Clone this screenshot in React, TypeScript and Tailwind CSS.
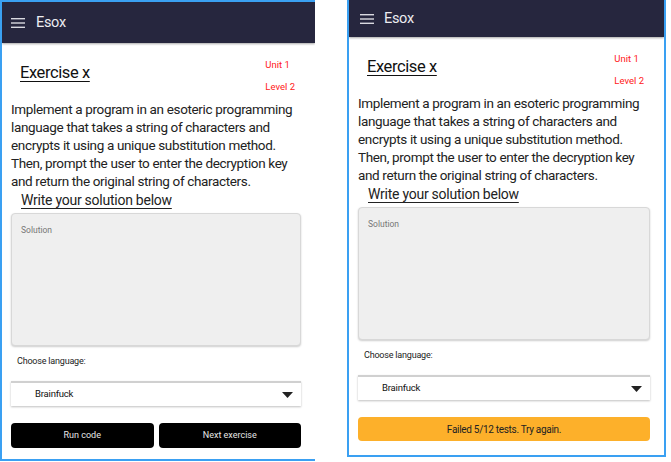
import React from "react";

const descriptionLines = [
  "Implement a program in an esoteric programming",
  "language that takes a string of characters and",
  "encrypts it using a unique substitution method.",
  "Then, prompt the user to enter the decryption key",
  "and return the original string of characters.",
];

function Hamburger() {
  return (
    <svg width="14" height="10" viewBox="0 0 14 10" className="shrink-0">
      <rect x="0" y="0" width="14" height="1.4" fill="#d9d9e0" />
      <rect x="0" y="4.3" width="14" height="1.4" fill="#d9d9e0" />
      <rect x="0" y="8.6" width="14" height="1.4" fill="#d9d9e0" />
    </svg>
  );
}

function Screen({ failed }: { failed?: boolean }) {
  return (
    <div className="flex flex-col">
      {/* App bar */}
      <div
        className={
          failed
            ? "flex h-[37px] items-center gap-[10px] bg-[#26263e] pl-[11px] shadow-[0_1px_2px_rgba(0,0,0,0.35)]"
            : "flex h-[41px] items-center gap-[11px] bg-[#26263e] pl-[9px] shadow-[0_1px_2px_rgba(0,0,0,0.35)]"
        }
      >
        <Hamburger />
        <span className="text-[14.5px] tracking-[-0.3px] text-[#ececf0]">Esox</span>
      </div>

      {/* Title */}
      <div className="flex h-[57px] justify-between pl-[18px] pr-[20px]">
        <span className="mt-[20px] text-[16.5px] leading-[20px] tracking-[-0.4px] text-[#111] underline decoration-[1px] underline-offset-[3px]">
          Exercise x
        </span>
        <div className="mt-[16px] flex flex-col gap-[10px] text-[9.5px] leading-[12px] text-[#ff2020]">
          <span>Unit 1</span>
          <span>Level 2</span>
        </div>
      </div>

      <div className="flex flex-col whitespace-nowrap pl-[9px] text-[13.5px] leading-[18px] tracking-[-0.35px] text-[#222]">
        {descriptionLines.map((line) => (
          <span key={line}>{line}</span>
        ))}
      </div>

      <span className="pl-[19px] pt-[1px] text-[14px] leading-[18px] tracking-[-0.25px] text-[#222] underline decoration-[1px] underline-offset-[3px]">
        Write your solution below
      </span>

      <div className="pl-[9px] pr-[14px]">
        <div className="mt-[4px] h-[133px] rounded-[4px] border border-[#d8d8d8] bg-[#efefef] px-[9px] pt-[10px] text-[8.5px] text-[#777] shadow-[0_1px_2px_rgba(0,0,0,0.2)]">
          Solution
        </div>

        <div className="mt-[9px] pl-[6px] text-[9px] leading-[12px] tracking-[-0.2px] text-[#222]">Choose language:</div>

        <div className="mt-[14px] flex h-[25px] items-center justify-between border-t-2 border-[#d0d0d0] bg-white pl-[24px] pr-[8px] shadow-[0_1px_2px_rgba(0,0,0,0.25)]">
          <span className="text-[9.5px] tracking-[-0.2px] text-[#111]">Brainfuck</span>
          <svg width="11" height="6" viewBox="0 0 11 6">
            <path d="M0 0 L11 0 L5.5 6 Z" fill="#222" />
          </svg>
        </div>

        {failed ? (
          <div className="mt-[17px] flex h-[24px] items-center justify-center rounded-[4px] bg-[#fdb02a] text-[10px] tracking-[-0.3px] text-[#222]">
            Failed 5/12 tests. Try again.
          </div>
        ) : (
          <div className="mt-[17px] flex gap-[5px]">
            <button className="flex h-[25px] flex-1 items-center justify-center rounded-[4px] bg-black text-[9px] text-[#e6e6e6]">
              Run code
            </button>
            <button className="flex h-[25px] flex-1 items-center justify-center rounded-[4px] bg-black text-[9px] text-[#e6e6e6]">
              Next exercise
            </button>
          </div>
        )}
      </div>
    </div>
  );
}

export default function App() {
  return (
    <div className="flex h-[462px] w-[671px] items-start bg-white [font-family:Roboto,sans-serif]">
      <div className="h-[461px] w-[315px] overflow-hidden border-b-2 border-l-2 border-t-2 border-[#3aa0f2]">
        <Screen />
      </div>
      <div className="ml-[32px] h-[457px] w-[319px] overflow-hidden border-b-2 border-l-2 border-r-2 border-[#3aa0f2]">
        <Screen failed />
      </div>
    </div>
  );
}
